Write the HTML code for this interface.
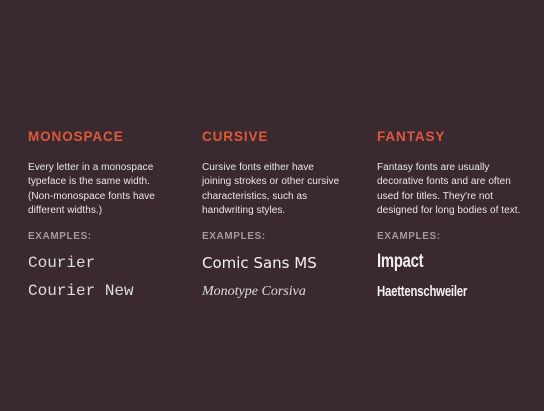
<!DOCTYPE html>
<html><head><meta charset="utf-8"><style>
html,body{margin:0;padding:0;width:544px;height:411px;background:#3a2a30;overflow:hidden;font-family:"Liberation Sans",sans-serif}
.col{position:absolute;top:0;width:170px}
.h{position:absolute;top:129px;font-size:13.5px;font-weight:bold;color:#e0583a;letter-spacing:0.9px;white-space:nowrap}
.p{position:absolute;top:161px;font-size:10px;line-height:14.3px;color:#ece6e8;white-space:nowrap;letter-spacing:0.05px}
.e{position:absolute;top:231px;font-size:10px;color:#a29a9e;letter-spacing:0.6px;font-weight:bold}
.x{position:absolute;color:#f4f0f2;white-space:nowrap}
</style></head><body>
<div class="col" style="left:28px">
<div class="h">MONOSPACE</div>
<div class="p">Every letter in a monospace<br>typeface is the same width.<br>(Non-monospace fonts have<br>different widths.)</div>
<div class="e">EXAMPLES:</div>
<div class="x" style="top:254px;font-family:'Liberation Mono',monospace;font-size:16px;color:#ddd">Courier</div>
<div class="x" style="top:282px;font-family:'Liberation Mono',monospace;font-size:16px;color:#ddd">Courier New</div>
</div>
<div class="col" style="left:202px">
<div class="h">CURSIVE</div>
<div class="p">Cursive fonts either have<br>joining strokes or other cursive<br>characteristics, such as<br>handwriting styles.</div>
<div class="e">EXAMPLES:</div>
<div class="x" style="top:254px;font-family:'DejaVu Sans',sans-serif;font-size:15px">Comic Sans MS</div>
<div class="x" style="top:284px;font-family:'Liberation Serif',serif;font-style:italic;font-size:14px;color:#ddd">Monotype Corsiva</div>
</div>
<div class="col" style="left:377px">
<div class="h">FANTASY</div>
<div class="p">Fantasy fonts are usually<br>decorative fonts and are often<br>used for titles. They're not<br>designed for long bodies of text.</div>
<div class="e">EXAMPLES:</div>
<div class="x" style="top:251px;font-weight:bold;font-size:19px;transform:scaleX(0.78);transform-origin:left;letter-spacing:-0.3px">Impact</div>
<div class="x" style="top:283px;font-weight:bold;font-size:15px;transform:scaleX(0.76);transform-origin:left;letter-spacing:-0.3px">Haettenschweiler</div>
</div>
</body></html>
